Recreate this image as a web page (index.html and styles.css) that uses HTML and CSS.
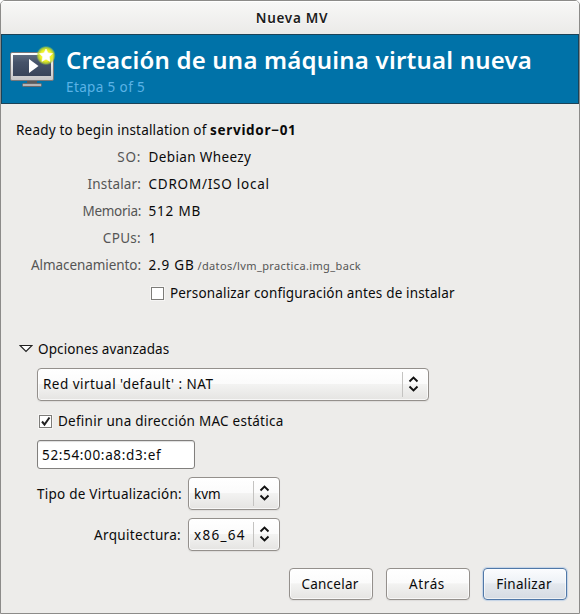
FILE: index.html
```
<!DOCTYPE html>
<html lang="es">
<head>
<meta charset="utf-8">
<title>Nueva MV</title>
<link rel="stylesheet" href="styles.css">
</head>
<body>
<div class="window">
  <div class="titlebar">Nueva MV</div>
  <header class="banner">
    <svg class="vm-icon" width="50" height="46" viewBox="0 0 50 46">
      <defs>
        <linearGradient id="frame" x1="0" y1="0" x2="0" y2="1"><stop offset="0" stop-color="#fff"/><stop offset="1" stop-color="#c4c4c6"/></linearGradient>
        <linearGradient id="screen" x1="0" y1="0" x2="0" y2="1"><stop offset="0" stop-color="#5d6a7e"/><stop offset=".35" stop-color="#46536a"/><stop offset="1" stop-color="#38445a"/></linearGradient>
        <radialGradient id="glow"><stop offset="0" stop-color="#ffff70"/><stop offset=".6" stop-color="#e9ef20"/><stop offset=".82" stop-color="#c4dc2c" stop-opacity=".75"/><stop offset="1" stop-color="#80c060" stop-opacity="0"/></radialGradient>
      </defs>
      <path d="M18 35h10v4H18z" fill="#5a5a5c"/>
      <rect x="13.500" y="37.500" width="19" height="3" rx="1" fill="#b5b5b7" stroke="#68686a"/>
      <rect x="1.500" y="6.500" width="43" height="28" rx="1.500" fill="url(#frame)" stroke="#77777a"/>
      <rect x="4" y="9" width="38" height="21" fill="url(#screen)"/>
      <path d="M20 13v14l9.500-7z" fill="#fff"/>
      <circle cx="37" cy="9.500" r="9.800" fill="url(#glow)"/>
      <path d="M37 3l2 4 4.500.6-3.300 3.200.9 4.600-4.100-2.300-4.100 2.300.9-4.600-3.300-3.200L35 7z" fill="#fff" stroke="#fff" stroke-width=".6" stroke-linejoin="round"/>
    </svg>
    <div>
      <h1 class="heading">Creación de una máquina virtual nueva</h1>
      <p class="step">Etapa 5 of 5</p>
    </div>
  </header>
  <main class="content">
    <p class="ready"><span class="ready-text">Ready to begin installation of</span> <b class="name">servidor−01</b></p>
    <dl class="summary">
      <dt class="t-so">SO:</dt><dd class="v-so">Debian Wheezy</dd>
      <dt class="t-inst">Instalar:</dt><dd class="v-inst">CDROM/ISO local</dd>
      <dt class="t-mem">Memoria:</dt><dd class="v-mem">512 MB</dd>
      <dt class="t-cpu">CPUs:</dt><dd>1</dd>
      <dt class="t-alm">Almacenamiento:</dt><dd><span class="v-alm">2.9 GB</span><small class="path">/datos/lvm_practica.img_back</small></dd>
    </dl>
    <div class="check customize"><span class="box"></span><span class="customize-text">Personalizar configuración antes de instalar</span></div>
    <div class="expander">
      <svg width="14" height="9" viewBox="0 0 14 9"><path d="M1 1.500h12L7 7.500z" fill="#fff" stroke="#222" stroke-width="1.200"/></svg>
      <span class="adv">Opciones avanzadas</span>
    </div>
    <div class="advanced">
      <div class="combo network"><span class="net">Red virtual 'default' : NAT</span><span class="arrows"><svg width="11" height="16" viewBox="0 0 11 16"><path d="M1.500 5.500l4-4 4 4M1.500 10.500l4 4 4-4" fill="none" stroke="#111" stroke-width="1.900"/></svg></span></div>
      <div class="check mac-check"><span class="box"><svg width="11" height="11" viewBox="0 0 11 11"><path d="M2 5.500l2.500 3L9.500 1.500" fill="none" stroke="#222" stroke-width="2"/></svg></span><span class="mac-text">Definir una dirección MAC estática</span></div>
      <div class="entry"><span class="mac">52:54:00:a8:d3:ef</span></div>
      <div class="choice"><span class="choice-label virt">Tipo de Virtualización:</span><div class="combo"><span class="kvm">kvm</span><span class="arrows"><svg width="11" height="16" viewBox="0 0 11 16"><path d="M1.500 5.500l4-4 4 4M1.500 10.500l4 4 4-4" fill="none" stroke="#111" stroke-width="1.900"/></svg></span></div></div>
      <div class="choice"><span class="choice-label arch">Arquitectura:</span><div class="combo"><span class="x86">x86_64</span><span class="arrows"><svg width="11" height="16" viewBox="0 0 11 16"><path d="M1.500 5.500l4-4 4 4M1.500 10.500l4 4 4-4" fill="none" stroke="#111" stroke-width="1.900"/></svg></span></div></div>
    </div>
  </main>
  <footer class="actions">
    <div class="button cancel">Cancelar</div>
    <div class="button back">Atrás</div>
    <div class="button primary">Finalizar</div>
  </footer>
</div>
</body>
</html>
```
FILE: styles.css
```
* { box-sizing: border-box; }
body { margin: 0; background: #fff; font: 13.5px/27px "Noto Sans", "Open Sans", sans-serif; color: #0a0a0a; overflow: hidden; }
h1, p, dl, dd { margin: 0; }
svg { display: block; flex: none; }
.window { width: 580px; height: 614px; border: 1px solid #8c8b89; border-radius: 5px 5px 0 0; background: #edecea; display: flex; flex-direction: column; overflow: hidden; }
.titlebar { height: 33px; line-height: 34px; text-align: center; font-weight: 600; font-size: 13.5px; letter-spacing: .7px; color: #1c1c1c; background: linear-gradient(#f8f8f7, #ebeae8); box-shadow: inset 0 1px #fff; text-shadow: 0 1px #fff; padding-left: 4px; }
.banner { height: 70px; background: #0072a8; border: 1px solid #1b4257; display: flex; padding: 10px 0 0 7px; gap: 7px; }
.vm-icon { margin-top: 1px; }
.heading { color: #fff; font-size: 24px; font-weight: 600; line-height: 30px; white-space: nowrap; letter-spacing: .21px; }
.step { color: #5bb2e6; font-size: 13.5px; line-height: 24px; letter-spacing: .38px; }
.content { padding: 13px 15px 0; flex: 1; }
.content span, .content dt, .content dd, .content p { white-space: nowrap; }
.ready-text { letter-spacing: .19px; }
.name { letter-spacing: .68px; }
.summary { display: grid; grid-template-columns: 125px auto; column-gap: 7.500px; }
.summary dt { text-align: right; color: #555; }
.t-so { letter-spacing: .7px; }
.t-inst { letter-spacing: .15px; }
.t-mem { letter-spacing: -.3px; }
.t-cpu { letter-spacing: .3px; }
.t-alm { letter-spacing: -.07px; }
.v-so { letter-spacing: .38px; }
.v-inst { letter-spacing: .77px; }
.v-mem, .v-alm { letter-spacing: .8px; }
.path { font-size: 11px; color: #555; margin-left: 3px; letter-spacing: .37px; }
.check { display: flex; align-items: center; height: 27px; }
.box { width: 13px; height: 13px; border: 1px solid #7d7c79; background: #fff; box-shadow: 0 0 0 1px #f6f5f4; flex: none; }
.customize { margin-left: 135px; margin-top: 1px; gap: 6px; }
.customize-text { letter-spacing: .16px; }
.expander { display: flex; align-items: center; gap: 5px; height: 27px; margin: 29px 0 0 3px; }
.expander svg { margin-top: -3px; }
.adv { letter-spacing: .1px; }
.advanced { padding-left: 21px; margin-top: 5px; }
.combo { width: 92px; height: 33px; border: 1px solid #94908c; border-radius: 4px; display: flex; align-items: center; justify-content: space-between; padding-left: 5px; background: linear-gradient(#fff, #fbfbfb 47%, #f3f3f2 49%, #e5e4e2); box-shadow: inset 0 0 0 1px rgba(255,255,255,.7), 0 1px 1px #dddcda; }
.network { width: 392px; }
.net { letter-spacing: .46px; }
.arrows { height: 25px; width: 26px; border-left: 1px solid #c4c3c1; display: flex; align-items: center; padding: 0 0 2px 5px; }
.mac-check { margin: 7px 0 5px 2px; gap: 6px; }
.mac-text { letter-spacing: .25px; }
.entry { width: 158px; height: 29px; line-height: 29px; padding-left: 4px; border: 1px solid #817f7d; border-radius: 3px; background: #fff; box-shadow: inset 0 1px 1px #ddd; margin-bottom: 8px; }
.mac { letter-spacing: .66px; }
.choice { display: flex; gap: 7px; align-items: center; margin-bottom: 8px; }
.choice-label { width: 144px; text-align: right; padding-top: 1px; }
.virt { letter-spacing: .24px; }
.arch { letter-spacing: .32px; }
.kvm, .x86 { padding-top: 1px; }
.x86 { letter-spacing: 1.300px; }
.actions { display: flex; justify-content: flex-end; gap: 13px; padding: 0 12px 13px 0; }
.button { width: 84px; height: 32px; line-height: 30px; text-align: center; padding-right: 2px; border: 1px solid #94908c; border-radius: 4px; background: linear-gradient(#fff, #fbfbfb 47%, #f3f3f2 49%, #e5e4e2); box-shadow: inset 0 0 0 1px rgba(255,255,255,.7), 0 1px 1px #dddcda; }
.cancel { letter-spacing: .25px; }
.back { letter-spacing: .6px; }
.primary { letter-spacing: .3px; border-color: #5078a8; background: linear-gradient(#fbfcfe, #edf1f6 47%, #e3e8ee 49%, #d6dbe2); box-shadow: inset 0 0 0 1px rgba(255,255,255,.6), 0 0 1px 1px #c3d3e6; }
```
